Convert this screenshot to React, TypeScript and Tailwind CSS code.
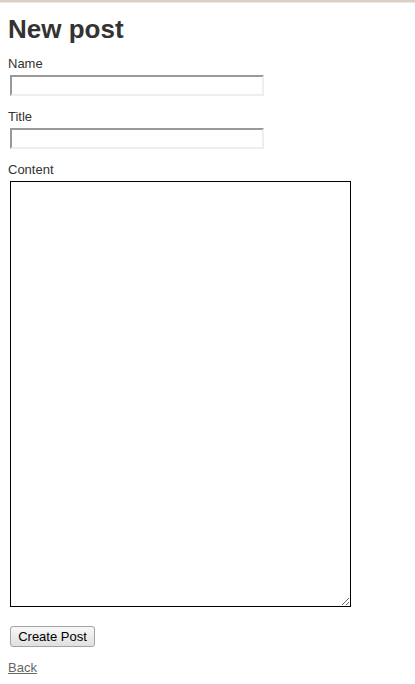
import React from 'react'

// Plain scaffold-style "New post" form
export default function App() {
  return (
    <div className="min-h-[684px] bg-white text-[#333] text-[13px]" style={{ fontFamily: '"Liberation Sans", Arial, sans-serif' }}>
      <div className="h-[2px] bg-[#d9d1c8]" />
      <div className="h-[1px] bg-[#ebe6e0]" />
      <div className="pl-[8px]">
        <h1 className="mt-[11px] text-[26px] leading-[30px] font-bold text-[#333]">New post</h1>

        <label className="block mt-[12px] leading-[15px]">Name</label>
        <input
          type="text"
          className="block mt-[4px] ml-[2px] w-[254px] h-[21px] bg-white border-2 border-t-[#999] border-l-[#999] border-b-[#eee] border-r-[#eee] outline-none"
        />

        <label className="block mt-[13px] leading-[15px]">Title</label>
        <input
          type="text"
          className="block mt-[4px] ml-[2px] w-[254px] h-[21px] bg-white border-2 border-t-[#999] border-l-[#999] border-b-[#eee] border-r-[#eee] outline-none"
        />

        <label className="block mt-[13px] leading-[15px]">Content</label>
        <textarea className="block mt-[4px] ml-[2px] w-[341px] h-[426px] border border-black bg-white outline-none resize" />

        <button
          type="button"
          className="block mt-[19px] ml-[2px] w-[85px] h-[21px] rounded-[3px] border border-[#a3a3a3] bg-gradient-to-b from-[#f8f8f8] to-[#e0e0e0] text-[13px] leading-[15px] text-black"
        >
          Create Post
        </button>

        <a href="#" className="inline-block mt-[13px] leading-[15px] text-[#666] underline">Back</a>
      </div>
    </div>
  )
}
